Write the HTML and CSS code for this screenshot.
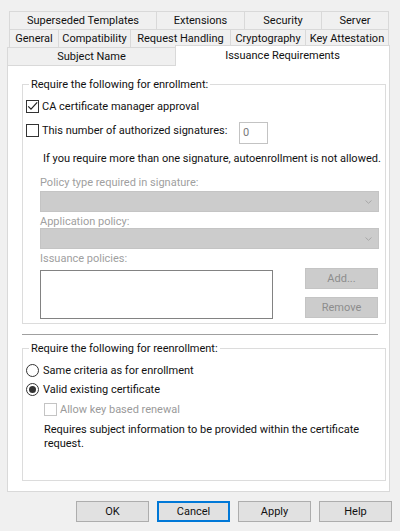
FILE: index.html
```html
<!DOCTYPE html>
<html lang="en">
<head>
<meta charset="utf-8">
<title>Certificate Template Properties</title>
<link rel="stylesheet" href="styles.css">
</head>
<body>
<div class="dialog">
  <div class="tabs">
    <div class="tabrow r1">
      <div class="tab">Superseded Templates</div>
      <div class="tab">Extensions</div>
      <div class="tab">Security</div>
      <div class="tab">Server</div>
    </div>
    <div class="tabrow r2">
      <div class="tab">General</div>
      <div class="tab">Compatibility</div>
      <div class="tab">Request Handling</div>
      <div class="tab">Cryptography</div>
      <div class="tab">Key Attestation</div>
    </div>
    <div class="tabrow r3">
      <div class="tab">Subject Name</div>
      <div class="tab sel">Issuance Requirements</div>
    </div>
  </div>

  <div class="panel">
    <fieldset class="group g1">
      <legend>Require the following for enrollment:</legend>
      <label class="opt row1">
        <span class="box checked"><svg viewBox="0 0 13 13" width="13" height="13"><path d="M2.2 6.3 L5 9.2 L11.2 2.3" fill="none" stroke="#222" stroke-width="1.2"/></svg></span>
        <span>CA certificate manager approval</span>
      </label>
      <div class="sigrow">
        <label class="opt sigopt">
          <span class="box"></span>
          <span>This number of authorized signatures:</span>
        </label>
        <div class="numbox">0</div>
      </div>
      <p class="info">If you require more than one signature, autoenrollment is not allowed.</p>
      <div class="fields">
        <div class="flabel l1">Policy type required in signature:</div>
        <div class="select s1"><svg viewBox="0 0 7 4" width="7" height="4"><path d="M0.5 0.5 L3.5 3.3 L6.5 0.5" fill="none" stroke="#a8a8a8" stroke-width="1"/></svg></div>
        <div class="flabel l2">Application policy:</div>
        <div class="select s2"><svg viewBox="0 0 7 4" width="7" height="4"><path d="M0.5 0.5 L3.5 3.3 L6.5 0.5" fill="none" stroke="#a8a8a8" stroke-width="1"/></svg></div>
        <div class="flabel l3">Issuance policies:</div>
        <div class="listrow">
          <div class="listbox"></div>
          <div class="listbtns">
            <div class="btn dis">Add...</div>
            <div class="btn dis rem">Remove</div>
          </div>
        </div>
      </div>
    </fieldset>

    <hr class="sep">

    <fieldset class="group g2">
      <legend>Require the following for reenrollment:</legend>
      <label class="opt rad r-a">
        <span class="radio"></span>
        <span>Same criteria as for enrollment</span>
      </label>
      <label class="opt rad r-b">
        <span class="radio on"></span>
        <span>Valid existing certificate</span>
      </label>
      <label class="opt renew">
        <span class="box disbox"></span>
        <span class="distext">Allow key based renewal</span>
      </label>
      <p class="note">Requires subject information to be provided within the certificate request.</p>
    </fieldset>
  </div>

  <div class="buttons">
    <div class="btn dlg">OK</div>
    <div class="btn dlg focus">Cancel</div>
    <div class="btn dlg">Apply</div>
    <div class="btn dlg">Help</div>
  </div>
</div>
</body>
</html>
```

FILE: styles.css
```css
* { box-sizing: border-box; }

html, body {
  margin: 0;
  padding: 0;
}

body {
  background: #f0f0f0;
  font-family: Roboto, "Liberation Sans", sans-serif;
  font-size: 11px;
  color: #111;
  width: 400px;
  height: 531px;
  overflow: hidden;
}

.dialog {
  padding: 11px 0 0 7px;
}

/* tabs */
.tabs {
  width: 383px;
  display: flex;
  flex-direction: column;
}

.tabrow {
  display: grid;
  height: 18px;
}

.r1, .r2 {
  margin: 0 1px 0 2px;
}

.r1 { grid-template-columns: 148px 88px 77px 67px; }
.r2 { grid-template-columns: 50px 72px 100px 75px 83px; }
.r3 { grid-template-columns: 169px 214px; }

.tab {
  border: 1px solid #d9d9d9;
  border-bottom: none;
  background: #f0f0f0;
  display: flex;
  align-items: center;
  justify-content: center;
  white-space: nowrap;
  margin-left: -1px;
  line-height: 13px;
}

.tab:first-child { margin-left: 0; }

.tab.sel {
  background: #fff;
  margin-top: -2px;
  margin-bottom: -1px;
  position: relative;
  z-index: 1;
  padding-bottom: 2px;
}

/* panel */
.panel {
  width: 383px;
  height: 427px;
  background: #fff;
  border: 1px solid #d9d9d9;
  padding: 12px 0 0 14px;
}

.group {
  margin: 0;
  padding: 0;
  border: 1px solid #dcdcdc;
  width: 364px;
  min-width: 0;
}

.group legend {
  padding: 0 2px;
  margin-left: 6px;
  line-height: 13px;
}

.g1 { padding-bottom: 4px; }
.g2 { padding-bottom: 29px; }

.opt {
  display: flex;
  align-items: center;
  height: 16px;
  white-space: nowrap;
}

.box {
  width: 13px;
  height: 13px;
  border: 1px solid #333;
  background: #fff;
  flex: none;
  margin-right: 3px;
  position: relative;
}

.box svg {
  position: absolute;
  left: -1px;
  top: -1px;
}

.row1 {
  margin: 7px 0 0 3px;
}

.sigrow {
  display: flex;
  align-items: flex-start;
  margin: 8px 0 0 3px;
}

.sigopt { width: 213px; }

.numbox {
  width: 29px;
  height: 22px;
  border: 1px solid #c3c3c3;
  background: #fff;
  color: #7a7a7a;
  padding: 3px 0 0 3px;
  line-height: 14px;
}

.info {
  margin: 8px 0 0 20px;
  line-height: 13px;
  white-space: nowrap;
}

.fields {
  margin-left: 17px;
  color: #a0a0a0;
}

.flabel { line-height: 13px; }
.l1 { margin-top: 11px; }
.l2 { margin-top: 3px; }
.l3 { margin-top: 3px; }

.select {
  width: 339px;
  height: 21px;
  background: #cccccc;
  border: 1px solid #c4c4c4;
  display: flex;
  align-items: center;
  justify-content: flex-end;
  padding-right: 6px;
}

.s1 { margin-top: 2px; }

.listrow {
  display: flex;
  margin-top: 3px;
}

.listbox {
  width: 233px;
  height: 49px;
  margin-top: 2px;
  border: 1px solid #828282;
  background: #fff;
}

.listbtns {
  margin-left: 32px;
  display: flex;
  flex-direction: column;
}

.btn {
  width: 73px;
  height: 21px;
  display: flex;
  align-items: center;
  justify-content: center;
  background: #e1e1e1;
  border: 1px solid #adadad;
  color: #111;
}

.btn.dis {
  background: #cccccc;
  border-color: #c4c4c4;
  color: #8c8c8c;
}

.btn.rem { margin-top: 8px; }

.sep {
  margin: 10px 0 0 0;
  width: 356px;
  height: 0;
  border: none;
  border-top: 1px solid #a0a0a0;
}

.g2 { margin-top: 7px; }

.radio {
  width: 13px;
  height: 13px;
  border: 1px solid #333;
  border-radius: 50%;
  background: #fff;
  flex: none;
  margin-right: 4px;
  display: flex;
  align-items: center;
  justify-content: center;
}

.radio.on::after {
  content: "";
  width: 7px;
  height: 7px;
  border-radius: 50%;
  background: #333;
}

.r-a { margin: 7px 0 0 3px; }
.r-b { margin: 3px 0 0 3px; }

.renew { margin: 4px 0 0 21px; }

.disbox {
  border-color: #c4c4c4;
}

.distext { color: #9a9a9a; }

.note {
  margin: 6px 0 0 21px;
  width: 320px;
  line-height: 14px;
}

/* dialog buttons */
.buttons {
  display: flex;
  justify-content: flex-end;
  gap: 8px;
  width: 385px;
  margin-top: 9px;
}

.btn.focus {
  border: 2px solid #0078d7;
}
```
